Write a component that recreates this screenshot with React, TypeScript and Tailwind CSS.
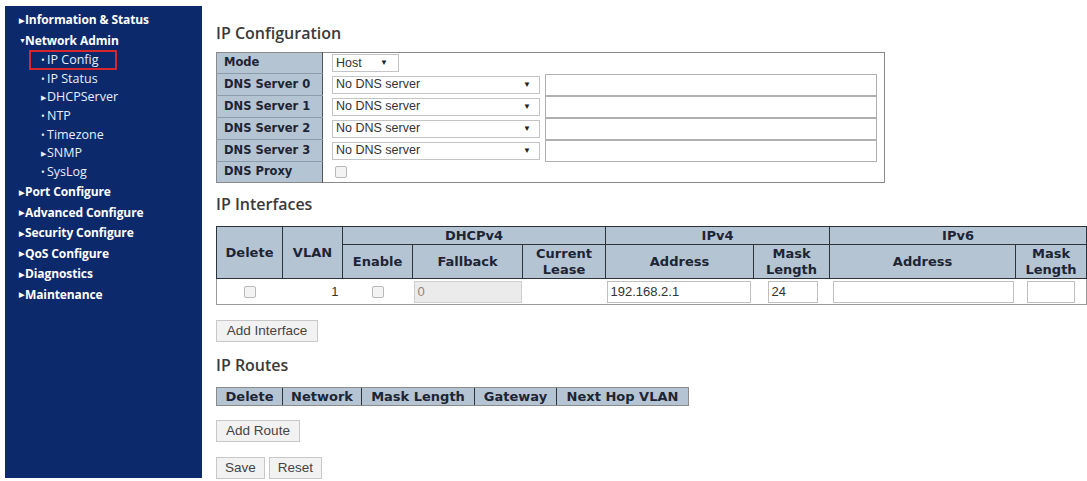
import React from "react";

const OPEN = { fontFamily: '"Open Sans", "Liberation Sans", Arial, sans-serif' };
const ARIAL = '[font-family:"Liberation_Sans",Arial,sans-serif]';
const VERD = '[font-family:"DejaVu_Sans",Verdana,sans-serif]';

function SideTop({ label, open }: { label: string; open?: boolean }) {
  return (
    <div className="h-[20.5px] flex items-center pl-[14px] text-white font-bold text-[12px] tracking-[-0.1px]">
      <span className="inline-block w-[5px] text-[7px] leading-none mr-[1px]">{open ? "▼" : "▶"}</span>
      {label}
    </div>
  );
}

function SideSub({ label, arrow, active }: { label: string; arrow?: boolean; active?: boolean }) {
  return (
    <div className="h-[18.7px] flex items-center pl-[24px]">
      <div
        className={
          "flex items-center h-[20px] pl-[10px] text-[#e8eeff] text-[12.5px] " +
          (active ? "border-2 border-[#d8262e] w-[88px]" : "border-2 border-transparent")
        }
      >
        {arrow ? (
          <span className="inline-block w-[6px] text-[7px] leading-none">▶</span>
        ) : (
          <span className="inline-block w-[6px] leading-none text-[10px]">•</span>
        )}
        {label}
      </div>
    </div>
  );
}

function Select({ text, w, pr }: { text: string; w: string; pr: string }) {
  return (
    <div className={"h-[18px] border border-[#c4c4c4] bg-white flex items-center justify-between pl-[3px] text-[12.5px] text-[#333] " + ARIAL + " " + w + " " + pr}>
      <span>{text}</span>
      <span className="text-[8px] text-[#222]">▼</span>
    </div>
  );
}

function Checkbox() {
  return <div className="w-[12px] h-[12px] border border-[#b8b8b8] bg-[#f3f3f3] rounded-[2px] mx-auto" />;
}

function Btn({ children, w }: { children: React.ReactNode; w: string }) {
  return (
    <div className={"h-[22px] border border-[#c8c8c8] bg-[#f2f2f2] flex items-center justify-center text-[13.5px] text-[#444] " + ARIAL + " " + w}>
      {children}
    </div>
  );
}

const labelCell = "bg-[#b4c4d3] border-b border-[#8c9cac] pl-[7px] font-bold text-[11.5px] text-[#1d2433] text-left " + VERD;
const th = "bg-[#b4c4d3] border border-[#2c323a] font-bold text-[13px] text-[#1d2433] text-center leading-[16px] p-0 " + VERD;
const heading = "h-[20px] leading-[20px] text-[16px] font-semibold text-[#3a3a3a]";

export default function App() {
  const dns = ["DNS Server 0", "DNS Server 1", "DNS Server 2", "DNS Server 3"];
  return (
    <div className="w-[1087px] h-[481px] bg-white flex overflow-hidden" style={OPEN}>
      <div className="w-[197px] h-[472px] ml-[5px] mt-[6px] bg-[#0c296b] pt-[4px] shrink-0">
        <SideTop label="Information & Status" />
        <SideTop label="Network Admin" open />
        <SideSub label="IP Config" active />
        <SideSub label="IP Status" />
        <SideSub label="DHCPServer" arrow />
        <SideSub label="NTP" />
        <SideSub label="Timezone" />
        <SideSub label="SNMP" arrow />
        <SideSub label="SysLog" />
        <SideTop label="Port Configure" />
        <SideTop label="Advanced Configure" />
        <SideTop label="Security Configure" />
        <SideTop label="QoS Configure" />
        <SideTop label="Diagnostics" />
        <SideTop label="Maintenance" />
      </div>

      <div className="ml-[14px] flex flex-col items-start">
        <div className={"mt-[23px] " + heading}>IP Configuration</div>

        <table className="mt-[9px] border border-[#8a8a8a] border-collapse w-[669px] table-fixed">
          <colgroup>
            <col className="w-[106px]" />
            <col />
          </colgroup>
          <tbody>
            <tr>
              <td className={labelCell + " h-[21px]"}>Mode</td>
              <td className="border-l border-[#555] pl-[9px] h-[21px]">
                <Select text="Host" w="w-[67px]" pr="pr-[10px]" />
              </td>
            </tr>
            {dns.map((d) => (
              <tr key={d}>
                <td className={labelCell + " h-[22px]"}>{d}</td>
                <td className="border-l border-[#555] pl-[9px] h-[22px]">
                  <div className="flex items-center gap-[5px]">
                    <Select text="No DNS server" w="w-[208px]" pr="pr-[8px]" />
                    <div className="w-[332px] h-[22px] border border-[#b0b0b0] bg-white" />
                  </div>
                </td>
              </tr>
            ))}
            <tr>
              <td className={labelCell + " h-[21px] border-b-0"}>DNS Proxy</td>
              <td className="border-l border-[#555] pl-[12px] h-[21px]">
                <div className="w-[12px] h-[12px] border border-[#b8b8b8] bg-[#f3f3f3] rounded-[2px]" />
              </td>
            </tr>
          </tbody>
        </table>

        <div className={"mt-[11px] " + heading}>IP Interfaces</div>

        <table className="mt-[12px] border-collapse table-fixed w-[870px]">
          <colgroup>
            <col className="w-[66px]" />
            <col className="w-[60px]" />
            <col className="w-[70px]" />
            <col className="w-[110px]" />
            <col className="w-[83px]" />
            <col className="w-[148px]" />
            <col className="w-[76px]" />
            <col className="w-[186px]" />
            <col className="w-[71px]" />
          </colgroup>
          <thead>
            <tr className="h-[18px]">
              <th rowSpan={2} className={th}>Delete</th>
              <th rowSpan={2} className={th}>VLAN</th>
              <th colSpan={3} className={th}>DHCPv4</th>
              <th colSpan={2} className={th}>IPv4</th>
              <th colSpan={2} className={th}>IPv6</th>
            </tr>
            <tr className="h-[34px]">
              <th className={th}>Enable</th>
              <th className={th}>Fallback</th>
              <th className={th}>Current<br />Lease</th>
              <th className={th}>Address</th>
              <th className={th}>Mask<br />Length</th>
              <th className={th}>Address</th>
              <th className={th}>Mask<br />Length</th>
            </tr>
          </thead>
          <tbody>
            <tr className={"h-[26px] text-[13px] text-[#333] " + ARIAL}>
              <td className="border-l border-b border-[#9a9a9a]"><Checkbox /></td>
              <td className="border-b border-[#9a9a9a] text-right pr-[4px]">1</td>
              <td className="border-b border-[#9a9a9a]"><Checkbox /></td>
              <td className="border-b border-[#9a9a9a] px-[1px]">
                <div className="h-[22px] bg-[#ebebeb] border border-[#cfcfcf] flex items-center pl-[3px] text-[#888]">0</div>
              </td>
              <td className="border-b border-[#9a9a9a]" />
              <td className="border-b border-[#9a9a9a] pl-[1px] pr-[3px]">
                <div className="h-[22px] bg-white border border-[#c0c0c0] flex items-center pl-[3px]">192.168.2.1</div>
              </td>
              <td className="border-b border-[#9a9a9a] pl-[14px] pr-[12px]">
                <div className="h-[22px] bg-white border border-[#c0c0c0] flex items-center pl-[3px]">24</div>
              </td>
              <td className="border-b border-[#9a9a9a] pl-[3px] pr-[2px]">
                <div className="h-[22px] bg-white border border-[#c0c0c0]" />
              </td>
              <td className="border-b border-r border-[#9a9a9a] px-[11px]">
                <div className="h-[22px] bg-white border border-[#c0c0c0]" />
              </td>
            </tr>
          </tbody>
        </table>

        <div className="mt-[15px]"><Btn w="w-[102px]">Add Interface</Btn></div>

        <div className={"mt-[13px] " + heading}>IP Routes</div>

        <div className={"mt-[12px] flex h-[19px] bg-[#b4c4d3] border border-[#8a8a8a] font-bold text-[13px] text-[#1d2433] " + VERD}>
          <div className="w-[66px] border-r border-[#2c323a] flex items-center justify-center">Delete</div>
          <div className="w-[79px] border-r border-[#2c323a] flex items-center justify-center">Network</div>
          <div className="w-[113px] border-r border-[#2c323a] flex items-center justify-center">Mask Length</div>
          <div className="w-[82px] border-r border-[#2c323a] flex items-center justify-center">Gateway</div>
          <div className="w-[131px] flex items-center justify-center">Next Hop VLAN</div>
        </div>

        <div className="mt-[14px]"><Btn w="w-[84px]">Add Route</Btn></div>

        <div className="mt-[15px] flex gap-[4px]">
          <Btn w="w-[49px]">Save</Btn>
          <Btn w="w-[53px]">Reset</Btn>
        </div>
      </div>
    </div>
  );
}
